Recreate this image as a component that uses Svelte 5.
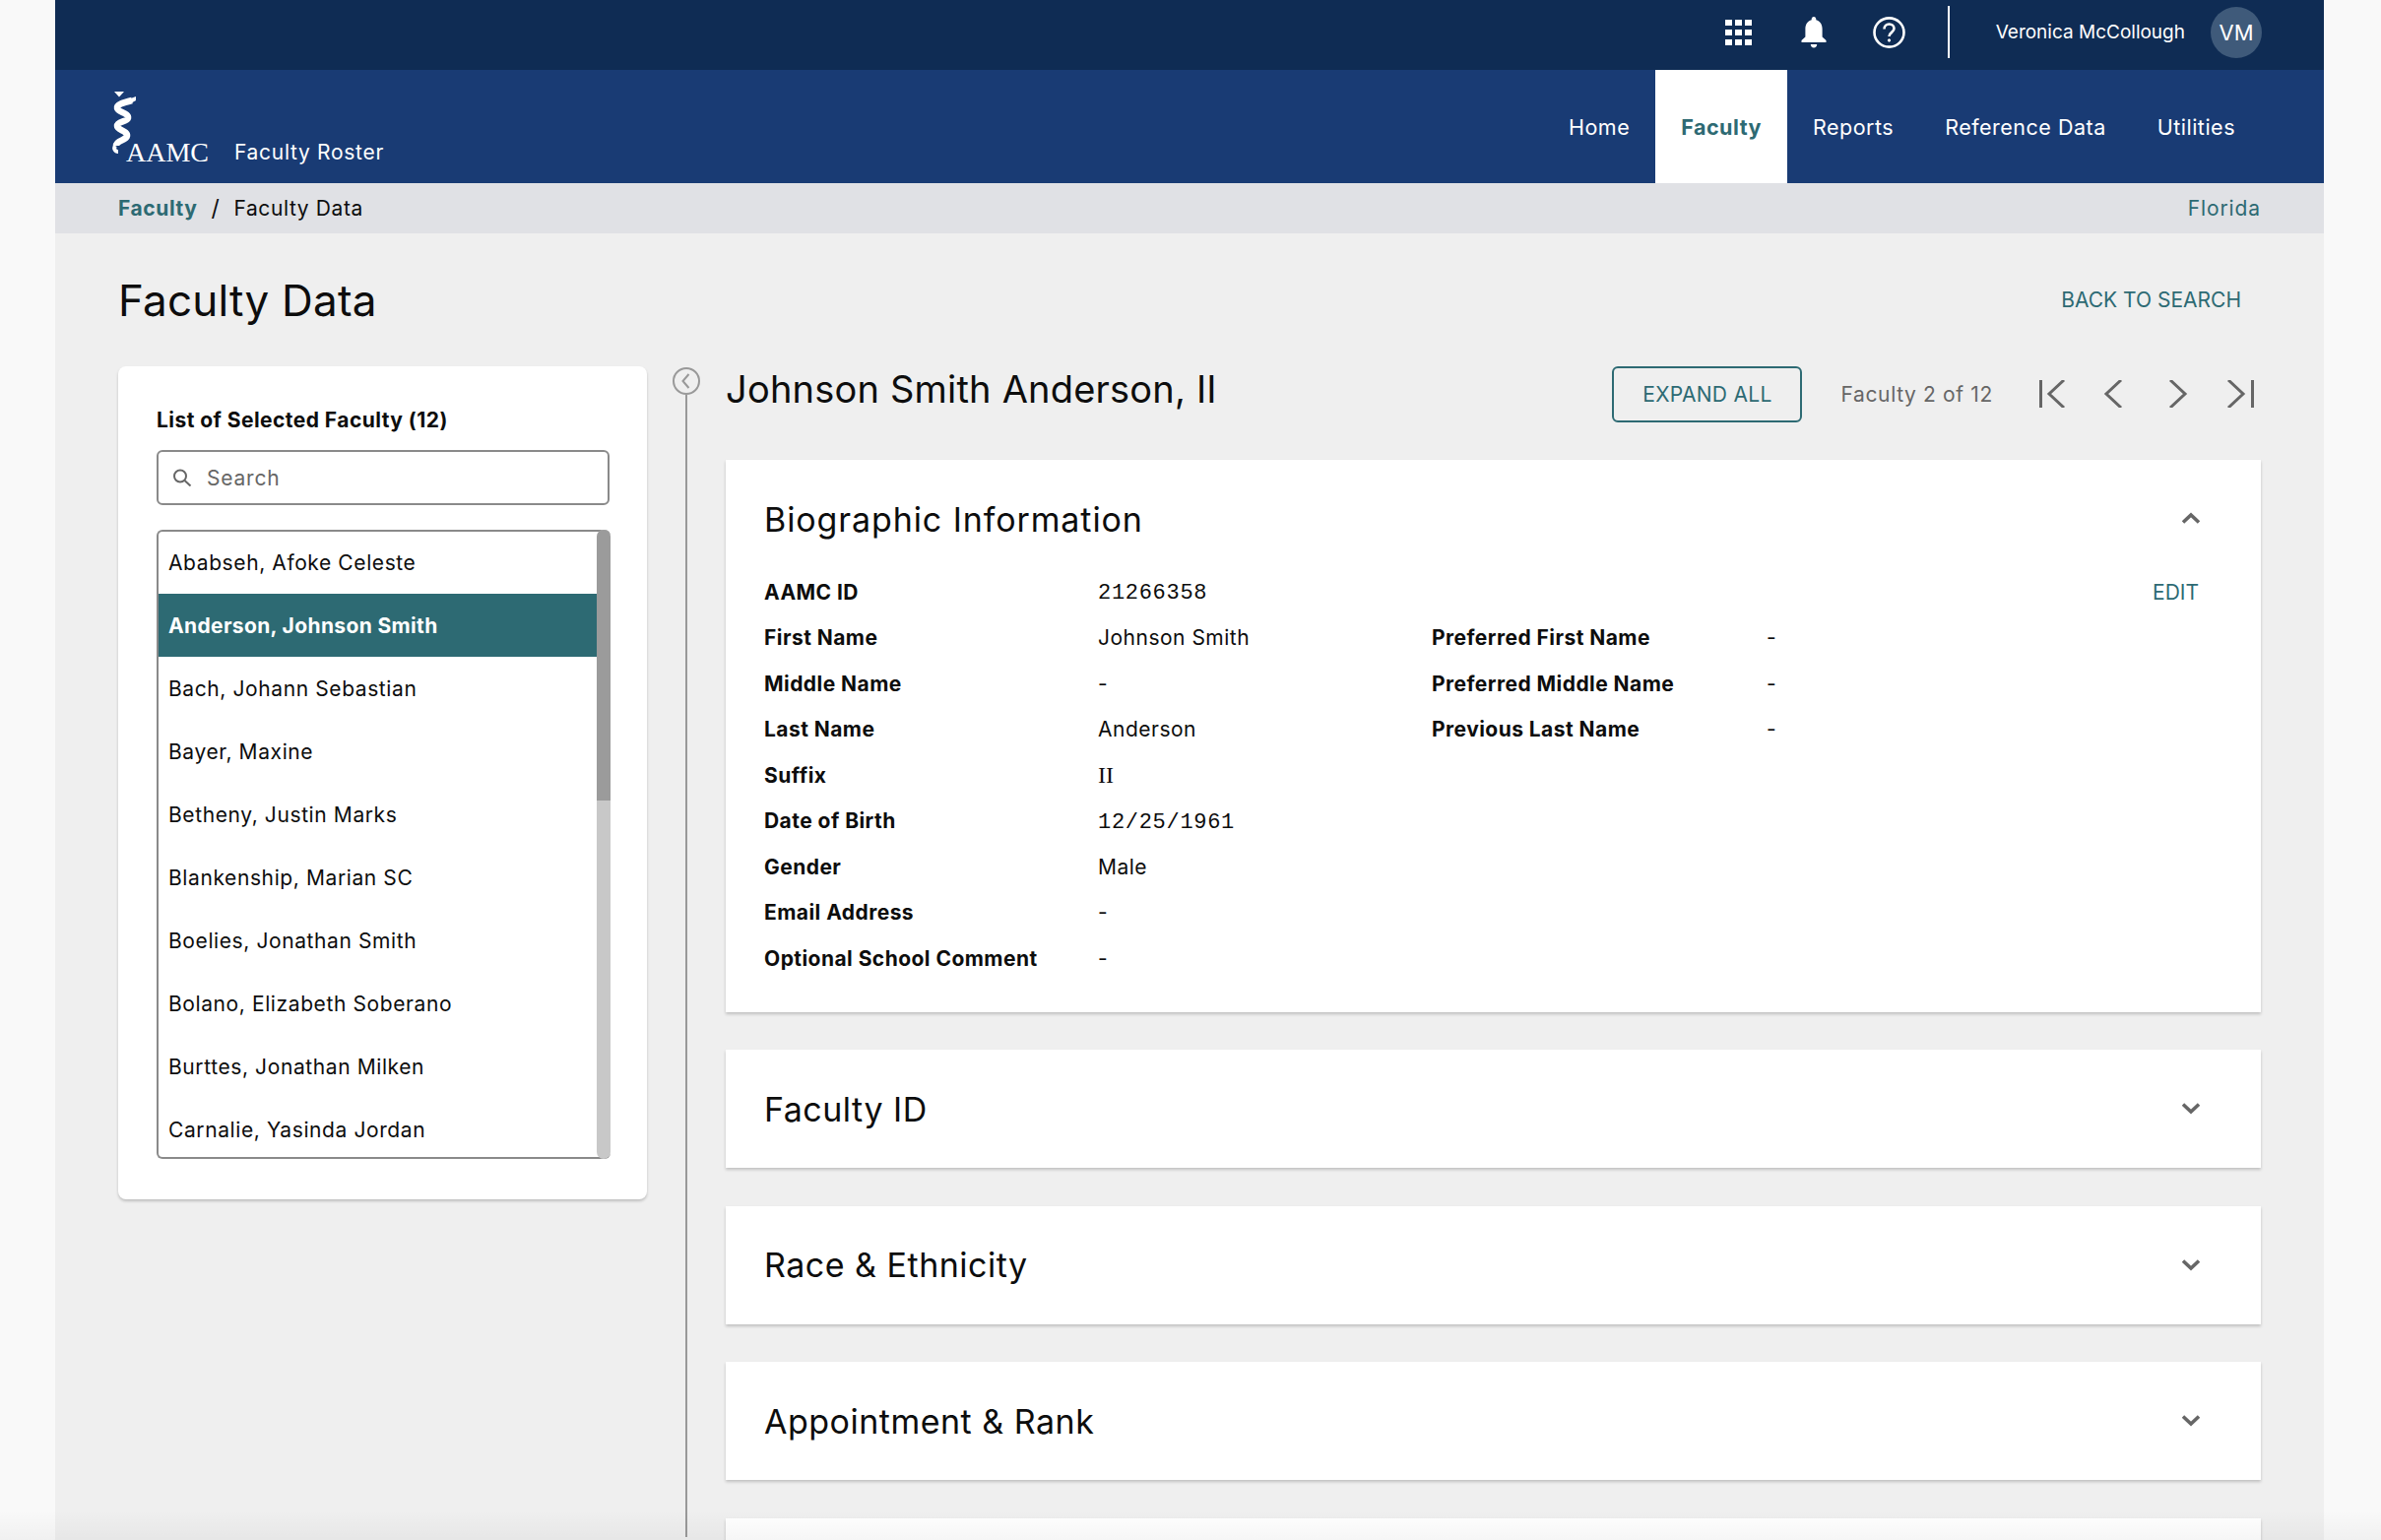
<script>
    const tabs = ['Home', 'Faculty', 'Reports', 'Reference Data', 'Utilities']

    const roster = [
        'Ababseh, Afoke Celeste',
        'Anderson, Johnson Smith',
        'Bach, Johann Sebastian',
        'Bayer, Maxine',
        'Betheny, Justin Marks',
        'Blankenship, Marian SC',
        'Boelies, Jonathan Smith',
        'Bolano, Elizabeth Soberano',
        'Burttes, Jonathan Milken',
        'Carnalie, Yasinda Jordan'
    ]

    const bio = [
        { label: 'AAMC ID', value: '21266358', kind: 'mono' },
        { label: 'First Name', value: 'Johnson Smith', label2: 'Preferred First Name', value2: '-' },
        { label: 'Middle Name', value: '-', label2: 'Preferred Middle Name', value2: '-' },
        { label: 'Last Name', value: 'Anderson', label2: 'Previous Last Name', value2: '-' },
        { label: 'Suffix', value: 'II', kind: 'slab' },
        { label: 'Date of Birth', value: '12/25/1961', kind: 'mono' },
        { label: 'Gender', value: 'Male' },
        { label: 'Email Address', value: '-' },
        { label: 'Optional School Comment', value: '-' }
    ]

    const sections = ['Faculty ID', 'Race & Ethnicity', 'Appointment & Rank', '']
</script>

<div class="page">
    <div class="frame">
        <div class="topbar">
            <svg class="grid-icon" width="27" height="26" viewBox="0 0 27 26" fill="#fff">
                {#each [0, 10, 20] as y}
                    {#each [0, 10, 20] as x}
                        <rect x={x} y={y} width="7" height="6" />
                    {/each}
                {/each}
            </svg>
            <svg class="bell-icon" width="26" height="32" viewBox="0 0 26 32" fill="#fff">
                <path d="M13 0c-1.4 0-2.3 1-2.3 2.4v.9C6.6 4.5 4.4 8 4.4 12.300v8.200L.5 24v2h25v-2l-3.900-3.500v-8.200c0-4.300-2.200-7.800-6.300-9v-.9C15.300 1 14.400 0 13 0z" />
                <path d="M9.800 28h6.400c0 2-1.400 3.500-3.200 3.500S9.800 30 9.800 28z" />
            </svg>
            <svg class="help-icon" width="33" height="32" viewBox="0 0 33 32" fill="none" stroke="#fff" stroke-width="2.600">
                <ellipse cx="16.500" cy="16" rx="15" ry="14.600" />
                <path d="M11.500 12.500c0-3 2.200-5 5-5s5 2 5 4.600c0 3.800-5 3.800-5 7.900" />
                <circle cx="16.500" cy="24" r="1.200" fill="#fff" stroke-width="1" />
            </svg>
            <div class="divider"></div>
            <span class="user">Veronica McCollough</span>
            <span class="avatar">VM</span>
        </div>

        <header class="nav">
            <div class="brand">
                <div class="logo">
                    <svg width="26" height="64" viewBox="0 0 26 64" fill="none" stroke="#fff">
                        <path d="M2 0h10l-5 5.500z" fill="#fff" stroke="none" />
                        <path d="M20 9C12 11 4 13 5 17c1 4 12 5 11 10-1 4-11 3-11 8 0 4 11 5 10 10-1 5-11 4-11 10" stroke-width="6.500" />
                        <path d="M24 5l-8 3 1 5 7-4z" fill="#fff" stroke="none" />
                        <path d="M3 55c-2 3 0 6 3 6" stroke-width="4" />
                    </svg>
                    <span class="wordmark">AAMC</span>
                </div>
                <span class="product">Faculty Roster</span>
            </div>
            <nav class="tabs">
                {#each tabs as tab}
                    <a class="tab" class:active={tab === 'Faculty'} href="#top">{tab}</a>
                {/each}
            </nav>
        </header>

        <div class="crumbs">
            <a class="crumb-link" href="#top">Faculty</a>
            <span class="slash">/</span>
            <span>Faculty Data</span>
            <a class="state" href="#top">Florida</a>
        </div>

        <div class="title-row">
            <h1>Faculty Data</h1>
            <a class="back" href="#top">BACK TO SEARCH</a>
        </div>

        <div class="body">
            <aside class="sidebar">
                <div class="side-title">List of Selected Faculty (12)</div>
                <div class="search">
                    <svg width="20" height="18" viewBox="0 0 20 18" fill="none" stroke="#666" stroke-width="2">
                        <circle cx="8" cy="7.500" r="6" />
                        <path d="M12.500 12l6 5.500" />
                    </svg>
                    <span>Search</span>
                </div>
                <div class="list">
                    <div class="rows">
                        {#each roster as name, i}
                            <div class="row" class:selected={i === 1}>{name}</div>
                        {/each}
                    </div>
                    <div class="scroll"><div class="thumb"></div></div>
                </div>
            </aside>

            <div class="rail">
                <svg width="28" height="28" viewBox="0 0 28 28" fill="none" stroke="#999" stroke-width="2">
                    <circle cx="14" cy="14" r="13" />
                    <path d="M16.500 7l-6 7 6 7" />
                </svg>
                <div class="rail-line"></div>
            </div>

            <main class="main">
                <div class="toolbar">
                    <h2>Johnson Smith Anderson, II</h2>
                    <button class="expand">EXPAND ALL</button>
                    <span class="count">Faculty 2 of 12</span>
                    <svg class="pager" width="218" height="28" viewBox="0 0 218 28" fill="none" stroke="#666" stroke-width="3">
                        <path d="M1.500 0v28M25 0L10 14l15 14" />
                        <path d="M83 0L68 14l15 14" />
                        <path d="M133 0l15 14-15 14" />
                        <path d="M192 0l15 14-15 14M216.500 0v28" />
                    </svg>
                </div>

                <section class="card bio">
                    <div class="card-head">
                        <h3>Biographic Information</h3>
                        <svg class="up" width="18" height="12" viewBox="0 0 18 12" fill="none" stroke="#666" stroke-width="3.500">
                            <path d="M1 10.500L9 3l8 7.500" />
                        </svg>
                    </div>
                    <div class="fields">
                        {#each bio as f, i}
                            <div class="field">
                                <span class="label">{f.label}</span>
                                <span class="value {f.kind || ''}">{f.value}</span>
                                {#if f.label2}
                                    <span class="label">{f.label2}</span>
                                    <span class="value">{f.value2}</span>
                                {/if}
                                {#if i === 0}
                                    <a class="edit" href="#top">EDIT</a>
                                {/if}
                            </div>
                        {/each}
                    </div>
                </section>

                {#each sections as title}
                    <section class="card">
                        <div class="card-head">
                            <h3>{title}</h3>
                            {#if title}
                                <svg width="18" height="12" viewBox="0 0 18 12" fill="none" stroke="#666" stroke-width="3.500">
                                    <path d="M1 1.500L9 9l8-7.500" />
                                </svg>
                            {/if}
                        </div>
                    </section>
                {/each}
            </main>
        </div>
    </div>
    <div class="fade"></div>
</div>

<style>
    :global(body) {
        margin: 0;
        background: #f9f9f9;
    }
    a {
        text-decoration: none;
    }
    h1, h2, h3 {
        margin: 0;
        font-weight: 400;
    }
    .page {
        position: relative;
        width: 2418px;
        height: 1564px;
        overflow: hidden;
        font-family: Inter, "Liberation Sans", sans-serif;
        color: #0d0d0d;
    }
    .frame {
        width: 2304px;
        height: 1564px;
        margin-left: 56px;
        background: #efefef;
        overflow: hidden;
    }
    .topbar {
        height: 71px;
        box-sizing: border-box;
        background: #0f2c54;
        display: flex;
        align-items: center;
        padding: 0 63px 6px 0;
        color: #fff;
    }
    .grid-icon {
        margin-left: auto;
    }
    .bell-icon {
        margin-left: 50px;
    }
    .help-icon {
        margin-left: 47px;
    }
    .divider {
        width: 2px;
        height: 53px;
        background: #fff;
        margin-left: 43px;
    }
    .user {
        margin-left: 47px;
        font-size: 19px;
    }
    .avatar {
        width: 52px;
        height: 52px;
        margin-left: 26px;
        border-radius: 50%;
        background: #3f5a7a;
        display: flex;
        align-items: center;
        justify-content: center;
        font-size: 22px;
    }
    .nav {
        height: 115px;
        background: #193b74;
        display: flex;
        justify-content: space-between;
        padding-right: 64px;
    }
    .brand {
        display: flex;
        align-items: flex-end;
        padding: 0 0 19px 58px;
        color: #fff;
    }
    .logo {
        display: flex;
        align-items: flex-end;
    }
    .logo svg {
        margin-bottom: 10px;
    }
    .wordmark {
        font-family: "Liberation Serif", serif;
        font-size: 28px;
        line-height: 28px;
        margin-left: -12px;
        margin-bottom: -2px;
    }
    .product {
        font-size: 21px;
        letter-spacing: 0.7px;
        margin-left: 26px;
        line-height: 24px;
    }
    .tabs {
        display: flex;
    }
    .tab {
        display: flex;
        align-items: center;
        padding: 0 26px;
        color: #fff;
        font-size: 21.500px;
        letter-spacing: 0.5px;
    }
    .tab.active {
        background: #fff;
        color: #2d6a73;
        font-weight: 700;
    }
    .crumbs {
        height: 51px;
        background: #e0e1e5;
        display: flex;
        align-items: center;
        padding: 0 64px;
        font-size: 21px;
        letter-spacing: 0.6px;
    }
    .crumb-link {
        color: #2d6a73;
        font-weight: 700;
    }
    .slash {
        margin: 0 14px;
        font-size: 23px;
    }
    .state {
        margin-left: auto;
        color: #2d6a73;
        letter-spacing: 0.9px;
    }
    .title-row {
        height: 135px;
        box-sizing: border-box;
        padding: 39px 84px 0 64px;
        display: flex;
        justify-content: space-between;
    }
    h1 {
        font-size: 44px;
        line-height: 58px;
        letter-spacing: 0.2px;
    }
    .back {
        color: #2d6a73;
        font-size: 21px;
        line-height: 58px;
    }
    .body {
        display: flex;
        align-items: stretch;
        height: 1192px;
        padding-left: 64px;
    }
    .sidebar {
        width: 537px;
        height: 846px;
        box-sizing: border-box;
        padding: 41px 38px 0 39px;
        background: #fff;
        border-radius: 8px;
        box-shadow: 0 2px 3px rgba(0, 0, 0, 0.2);
    }
    .side-title {
        font-size: 21px;
        letter-spacing: 0.45px;
        line-height: 28px;
        font-weight: 700;
    }
    .search {
        height: 56px;
        margin-top: 16px;
        box-sizing: border-box;
        border: 2px solid #8a8a8a;
        border-radius: 6px;
        display: flex;
        align-items: center;
        gap: 15px;
        padding-left: 14px;
        color: #666;
        font-size: 21px;
        letter-spacing: 0.8px;
    }
    .list {
        width: 461px;
        height: 639px;
        margin-top: 25px;
        box-sizing: border-box;
        border: 2px solid #8a8a8a;
        border-right: 0;
        border-radius: 6px;
        display: flex;
    }
    .rows {
        flex: 1;
        margin-top: -1px;
        overflow: hidden;
    }
    .row {
        height: 64px;
        display: flex;
        align-items: center;
        padding-left: 10px;
        font-size: 21px;
        letter-spacing: 0.6px;
    }
    .row.selected {
        background: #2d6a73;
        color: #fff;
        font-weight: 700;
        letter-spacing: 0.35px;
    }
    .scroll {
        width: 14px;
        margin: -2px 0;
        border-radius: 7px;
        background: #c8c8c8;
    }
    .thumb {
        height: 275px;
        border-radius: 7px 7px 0 0;
        background: #9b9b9b;
    }
    .rail {
        width: 28px;
        margin: 1px 26px 3px;
        display: flex;
        flex-direction: column;
        align-items: center;
    }
    .rail svg {
        flex: none;
    }
    .rail-line {
        flex: 1;
        width: 2px;
        background: #999;
    }
    .main {
        width: 1559px;
    }
    .toolbar {
        height: 95px;
        display: flex;
        align-items: flex-start;
    }
    h2 {
        font-size: 38px;
        line-height: 46px;
        letter-spacing: 0.2px;
        margin-right: auto;
    }
    .expand {
        width: 193px;
        height: 57px;
        border: 2px solid #2d6a73;
        border-radius: 6px;
        background: transparent;
        color: #2d6a73;
        font: inherit;
        font-size: 21px;
        letter-spacing: 0.3px;
    }
    .count {
        margin-left: 39px;
        line-height: 57px;
        color: #666;
        font-size: 21px;
        letter-spacing: 0.65px;
    }
    .pager {
        margin: 14px 7px 0 47px;
    }
    .card {
        background: #fff;
        box-shadow: 0 2px 3px rgba(0, 0, 0, 0.2);
        margin-bottom: 38.600px;
    }
    .card-head {
        height: 120px;
        box-sizing: border-box;
        padding: 0 62px 0 39px;
        display: flex;
        align-items: center;
        justify-content: space-between;
    }
    .up {
        margin-top: -3px;
    }
    h3 {
        font-size: 34px;
        letter-spacing: 0.5px;
    }
    .bio h3 {
        letter-spacing: 0.9px;
    }
    .fields {
        margin-top: -9px;
        padding: 0 63px 31px 39px;
    }
    .field {
        height: 46.500px;
        display: grid;
        grid-template-columns: 339px 339px 340px 1fr;
        align-items: center;
        font-size: 21px;
    }
    .value {
        letter-spacing: 0.5px;
    }
    .label {
        font-weight: 700;
        letter-spacing: 0.45px;
    }
    .mono {
        font-family: "Liberation Mono", monospace;
        font-size: 22px;
        letter-spacing: 0.7px;
        padding-top: 3px;
    }
    .slab {
        font-family: "Liberation Serif", serif;
        font-size: 24px;
        letter-spacing: 0;
    }
    .edit {
        grid-column: 4;
        justify-self: end;
        color: #2d6a73;
    }
    .fade {
        position: absolute;
        left: 0;
        right: 0;
        bottom: 0;
        height: 30px;
        background: linear-gradient(rgba(0, 0, 0, 0), rgba(0, 0, 0, 0.035));
    }
</style>
